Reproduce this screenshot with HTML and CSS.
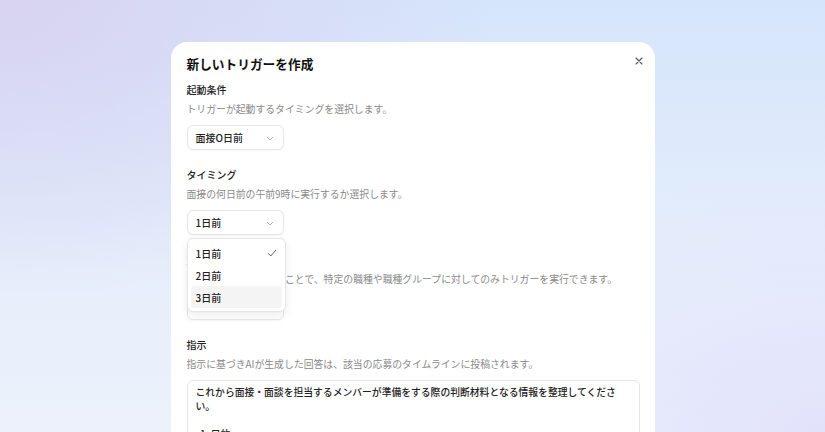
FILE: index.html
```html
<!DOCTYPE html>
<html lang="ja">
<head>
  <meta charset="UTF-8" />
  <meta name="viewport" content="width=device-width, initial-scale=1.0"/>
  <title>新しいトリガーを作成</title>
  <link rel="stylesheet" href="styles.css">
</head>
<body>
  <div class="modal">
    <div class="modal-head">
      <h2>新しいトリガーを作成</h2>
      <button type="button" class="close-btn" aria-label="閉じる">
        <svg width="8" height="8" viewBox="0 0 8 8"><path d="M1 1L7 7M7 1L1 7" stroke="#555" stroke-width="1.1" stroke-linecap="round"/></svg>
      </button>
    </div>

    <div class="field">
      <div class="label">起動条件</div>
      <div class="desc">トリガーが起動するタイミングを選択します。</div>
      <div class="select-wrap">
        <div class="select">
          <span>面接O日前</span>
          <svg class="chev" width="8" height="5" viewBox="0 0 8 5"><path d="M1 1L4 4L7 1" fill="none" stroke="#aaa" stroke-width="0.9"/></svg>
        </div>
      </div>
    </div>

    <div class="field">
      <div class="label">タイミング</div>
      <div class="desc">面接の何日前の午前9時に実行するか選択します。</div>
      <div class="select-wrap">
        <div class="select">
          <span>1日前</span>
          <svg class="chev" width="8" height="5" viewBox="0 0 8 5"><path d="M1 1L4 4L7 1" fill="none" stroke="#aaa" stroke-width="0.9"/></svg>
        </div>
        <ul class="menu">
          <li class="menu-item">1日前
            <svg width="10" height="8" viewBox="0 0 10 8"><path d="M1 4.2L3.8 7L9 1" fill="none" stroke="#666" stroke-width="1"/></svg>
          </li>
          <li class="menu-item">2日前</li>
          <li class="menu-item hover">3日前</li>
        </ul>
      </div>
    </div>

    <div class="field">
      <div class="label">対象職種</div>
      <div class="desc">対象の職種を指定することで、特定の職種や職種グループに対してのみトリガーを実行できます。</div>
      <div class="select-wrap">
        <div class="select">
          <span></span>
          <svg class="chev" width="8" height="5" viewBox="0 0 8 5"><path d="M1 1L4 4L7 1" fill="none" stroke="#aaa" stroke-width="0.9"/></svg>
        </div>
      </div>
    </div>

    <div class="field">
      <div class="label">指示</div>
      <div class="desc">指示に基づきAIが生成した回答は、該当の応募のタイムラインに投稿されます。</div>
      <div class="textarea">これから面接・面談を担当するメンバーが準備をする際の判断材料となる情報を整理してください。

  1. 目的</div>
    </div>
  </div>
</body>
</html>
```

FILE: styles.css
```css
* {
  box-sizing: border-box;
  margin: 0;
  padding: 0;
}

body {
  font-family: "Noto Sans CJK JP", "Noto Sans", sans-serif;
  height: 100vh;
  overflow: hidden;
  color: #222;
  background:
    radial-gradient(ellipse 60% 70% at 0% 0%, #d8d3f1 0%, rgba(216,211,241,0) 100%),
    radial-gradient(ellipse 55% 60% at 100% 100%, #e2e3fb 0%, rgba(226,227,251,0) 100%),
    linear-gradient(180deg, #d5e5fb 0%, #e8effb 70%, #ecf1fb 100%);
}

.modal {
  width: 484px;
  margin: 42px auto 0;
  background: #fff;
  border-radius: 16px;
  padding: 12px 15px 0 16px;
  min-height: 420px;
}

.modal-head {
  display: flex;
  justify-content: space-between;
  align-items: flex-start;
  margin-bottom: 10px;
}

.modal-head h2 {
  font-size: 12.7px;
  line-height: 18px;
  font-weight: 700;
  color: #111;
  margin-top: 1px;
}

.close-btn {
  border: none;
  background: none;
  width: 16px;
  height: 16px;
  margin-top: -1px;
  margin-right: -7px;
  display: flex;
  align-items: center;
  justify-content: center;
  cursor: pointer;
}

.field {
  margin-bottom: 18px;
}

.label {
  font-size: 10px;
  line-height: 14px;
  font-weight: 500;
  color: #222;
}

.desc {
  font-size: 9.85px;
  line-height: 14px;
  color: #8a8a8a;
  margin-top: 5px;
}

.select-wrap {
  position: relative;
  margin-top: 9px;
  width: 97px;
}

.select {
  height: 25px;
  border: 1px solid #e6e6e9;
  border-radius: 6px;
  box-shadow: 0 1px 2px rgba(0,0,0,0.04);
  display: flex;
  align-items: center;
  justify-content: space-between;
  padding: 0 9px 0 8px;
  font-size: 10px;
  font-weight: 500;
  color: #222;
}

.chev {
  margin-top: 1px;
}

.menu {
  list-style: none;
  position: absolute;
  top: 28px;
  left: 0;
  width: 99px;
  background: #fff;
  border: 1px solid #e6e6e9;
  border-radius: 6px;
  box-shadow: 0 3px 8px rgba(0,0,0,0.08);
  padding: 3px;
  z-index: 2;
}

.menu-item {
  height: 22px;
  display: flex;
  align-items: center;
  justify-content: space-between;
  padding: 0 5px 0 5px;
  font-size: 10px;
  font-weight: 500;
  color: #222;
  border-radius: 4px;
}

.menu-item.hover {
  background: #f4f4f5;
}

.textarea {
  margin-top: 9px;
  border: 1px solid #e6e6e9;
  border-radius: 6px;
  padding: 4px 12px 4px 8px;
  font-size: 9.8px;
  line-height: 14px;
  font-weight: 500;
  color: #222;
  white-space: pre-wrap;
  min-height: 80px;
}
```
